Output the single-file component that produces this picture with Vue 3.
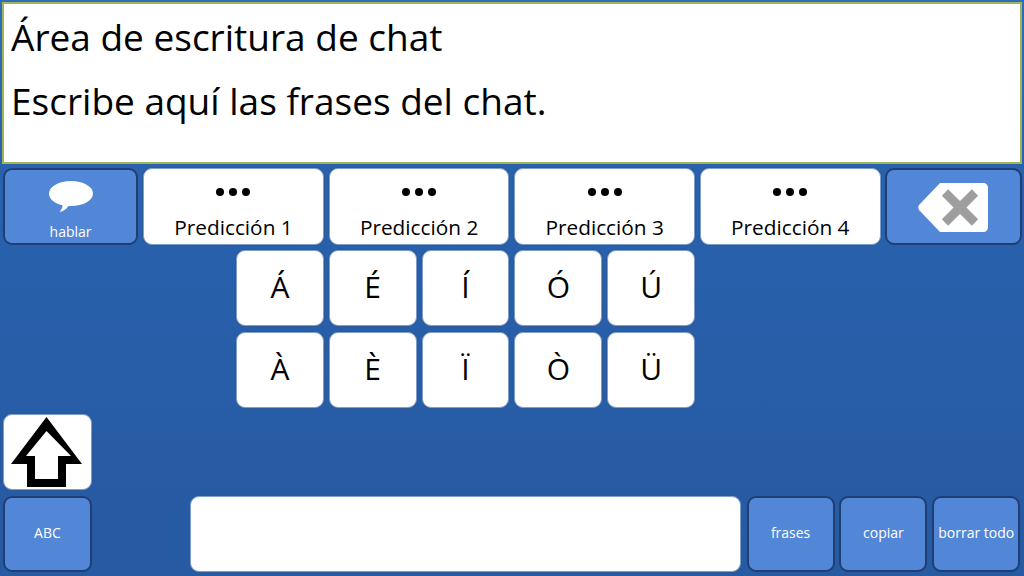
<script setup>
const predictions = ['Predicción 1', 'Predicción 2', 'Predicción 3', 'Predicción 4']
const accentRows = [
	['Á', 'É', 'Í', 'Ó', 'Ú'],
	['À', 'È', 'Ï', 'Ò', 'Ü']
]
const actions = ['frases', 'copiar', 'borrar todo']
</script>

<template>
	<div class="screen">
		<div class="chat-box">
			<p>Área de escritura de chat</p>
			<p>Escribe aquí las frases del chat.</p>
		</div>

		<div class="keys">
			<button class="key blue wide speak">
				<svg width="46" height="32" viewBox="0 0 46 32">
					<path d="M23 0C35 0 45 5.500 45 12.500C45 19.500 35 25 23 25C22 25 21.500 25 20.500 25C18.500 28 15 30.500 11.500 31C13.500 28.500 14.500 26.500 14.500 24.200C6.500 22.500 1 18 1 12.500C1 5.500 11 0 23 0Z" fill="#fff" />
				</svg>
				<span class="small-label">hablar</span>
			</button>

			<button
				v-for="prediction in predictions"
				:key="prediction"
				class="key white prediction"
			>
				<span class="dots"><i></i><i></i><i></i></span>
				<span class="prediction-label">{{ prediction }}</span>
			</button>

			<button class="key blue wide delete">
				<svg width="70" height="49" viewBox="0 0 70 49">
					<path d="M22 0H65C68 0 70 2 70 5V44C70 47 68 49 65 49H22L1 27C0 25.500 0 23.500 1 22Z" fill="#fff" />
					<path d="M27 9.500L57 39.500M57 9.500L27 39.500" fill="none" stroke="#9e9e9e" stroke-width="9" />
				</svg>
			</button>

			<template v-for="(row, index) in accentRows" :key="index">
				<button
					v-for="(letter, i) in row"
					:key="letter"
					class="key white letter"
					:class="{ 'row-start': i === 0 }"
				>
					{{ letter }}
				</button>
			</template>

			<button class="key white shift">
				<svg width="72" height="72" viewBox="0 0 72 72">
					<path fill-rule="evenodd" d="M35.500 1L71 48H55V71H16V48H0ZM35.500 15L15 40H24V63H47V40H60Z" fill="#000" />
				</svg>
			</button>

			<button class="key blue abc">ABC</button>
			<div class="key white text-field"></div>
			<div class="actions">
				<button
					v-for="action in actions"
					:key="action"
					class="key blue action"
				>
					{{ action }}
				</button>
			</div>
		</div>
	</div>
</template>

<style scoped>
.screen {
	width: 1024px;
	height: 576px;
	box-sizing: border-box;
	padding: 2px;
	display: flex;
	flex-direction: column;
	gap: 4px;
	background: linear-gradient(#2f6dba, #2a62ae 25%, #265aa2);
	font-family: "Open Sans", "Noto Sans", sans-serif;
	overflow: hidden;
}

.chat-box {
	height: 162px;
	box-sizing: border-box;
	padding: 1px 7px 0;
	flex-shrink: 0;
	background: #fff;
	border: 2px solid #a0b45a;
	color: #000;
	font-size: 37px;
	line-height: 64px;
}

.chat-box p {
	margin: 0;
}

.keys {
	margin: 0 2.200px 0 1px;
	display: grid;
	grid-template-columns: repeat(22, 1fr);
	grid-template-rows: repeat(5, 76px);
	row-gap: 6px;
	column-gap: 4px;
}

.key {
	grid-column: span 2;
	padding: 0;
	box-sizing: border-box;
	border-radius: 9px;
	display: flex;
	flex-direction: column;
	align-items: center;
	justify-content: center;
	font-family: inherit;
}

.blue {
	background: #5286d6;
	border: 2px solid #1f3f73;
	color: #fff;
	font-size: 14px;
}

.white {
	background: #fff;
	border: 1px solid #7f9fcb;
	box-shadow: 0 0 0 1px #2d5a99;
	color: #000;
}

.wide {
	grid-column: span 3;
}

.speak {
	margin-bottom: -1px;
	padding-top: 11px;
	justify-content: flex-start;
}

.small-label {
	margin-top: 9px;
	font-size: 14px;
	line-height: 20px;
}

.delete {
	margin: 0 -2px -1px 0;
	padding-top: 2px;
}

.prediction {
	grid-column: span 4;
	margin: 0 0 -1px 1px;
	padding-top: 19px;
	justify-content: flex-start;
}

.dots {
	display: flex;
	gap: 5px;
}

.dots i {
	width: 8px;
	height: 8px;
	border-radius: 50%;
	background: #000;
}

.prediction-label {
	margin-top: 18px;
	font-size: 20.800px;
	line-height: 26px;
	white-space: nowrap;
}

.letter {
	margin-left: 1px;
	padding-bottom: 3px;
	font-size: 30px;
}

.row-start {
	grid-column: 6 / span 2;
}

.shift {
	grid-column: 1 / span 2;
	grid-row: 4;
}

.abc {
	grid-column: 1 / span 2;
	grid-row: 5;
	padding-bottom: 4px;
}

.text-field {
	grid-column: 5 / span 12;
	grid-row: 5;
	margin-left: 1.500px;
}

.actions {
	grid-column: 17 / span 6;
	grid-row: 5;
	margin: 0 -0.400px 0 1.200px;
	display: grid;
	grid-template-columns: repeat(3, 1fr);
	column-gap: 4.800px;
}

.action {
	grid-column: auto;
	padding-bottom: 4px;
	white-space: nowrap;
}
</style>

<style>
html,
body {
	margin: 0;
	background: #265aa2;
}
</style>
